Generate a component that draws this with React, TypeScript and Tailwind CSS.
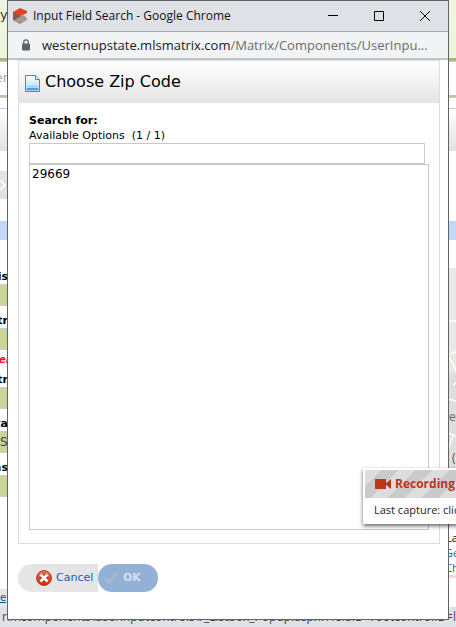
import React from "react";

const ui = "font-['Open_Sans','Noto_Sans',sans-serif]";
const verdana = "font-['DejaVu_Sans',sans-serif]";

function LeftField({ label, value = "" }: { label: string; value?: string }) {
  return (
    <label className="block text-[11px] leading-[14px] font-bold text-black">
      <span className="flex h-[22px] w-2 items-end justify-end whitespace-nowrap">{label}</span>
      <input
        className="block h-[22px] w-full border-y border-[#ccc] bg-[#c8d69b] p-0 text-[12px] font-normal text-[#444]"
        defaultValue={value}
      />
    </label>
  );
}

function LeftColumn() {
  return (
    <div className="w-2 shrink-0 overflow-hidden">
      <div className="h-[22px]" />
      <LeftField label="is" />
      <LeftField label="tr" />
      <p className="flex h-[15px] items-end justify-center pt-1 text-[10px] leading-[10px] font-bold whitespace-nowrap text-[#e8102a] italic">el</p>
      <LeftField label="tr" />
      <LeftField label="ta" value="Se" />
      <LeftField label="ns" />
      <div className="h-[92px]" />
      <div className="h-[18px] bg-[#e6e6e6]">
        <a href="#more" className="block pt-1 text-[10px] leading-[10px] text-[#0052a5] underline">e</a>
      </div>
    </div>
  );
}

function RightColumn() {
  return (
    <div className="w-2 shrink-0 overflow-hidden">
      <div className="h-7" />
      <div className="h-[234px] bg-[#e8e8e4]">
        <svg className="block" width="8" height="234" viewBox="0 0 8 234" fill="none">
          <path d="M0 105H8V234H0z" fill="#dededf" />
          <path d="M0 53H8M0 87L8 84M0 88Q5 94 8 103M5 117L8 115M0 131L8 133M0 165L8 168M5 168L0 181" stroke="#fff" strokeWidth="1.5" />
          <text x="1" y="153" fontFamily="Open Sans" fontSize="12" fill="#666">e</text>
          <text x="4" y="194" fontFamily="Open Sans" fontSize="12" fill="#555">(</text>
        </svg>
      </div>
      <div className="h-7" />
      <div className={`${ui} flex h-[45px] flex-col items-center text-[11px] leading-[15px] whitespace-nowrap`}>
        <p className="text-black">La</p>
        <a href="#get" className="block text-[#1f5dab]">Ge</a>
        <a href="#change" className="block text-[#1f5dab]">Ch</a>
      </div>
      <div className="h-[3px] bg-[#f3d9dc]" />
    </div>
  );
}

function PageBehind() {
  return (
    <div className={`${verdana} overflow-hidden bg-white`}>
      <div className="h-[58px] bg-linear-to-b from-[#f1f5df] to-[#edf4da] pt-[7px] text-[13px] leading-4 text-[#333]">y</div>
      <div className="h-[3px] bg-[#a5b77f]" />
      <div className="h-[34px] border-t border-[#ccc] text-[13px] leading-8 text-[#aaa]">
        <span className="flex w-2 justify-end">er</span>
      </div>
      <div className="h-[3px] border-b border-[#ccc] bg-[#bac896]" />
      <div className="h-[10px]" />
      <div className="h-[43px] border-t border-[#ccc] bg-linear-to-b from-white to-[#e0e0e0]" />
      <div className="h-5" />
      <div className="flex h-7 w-2 items-center bg-[#e2e2e2]">
        <svg width="8" height="12" viewBox="0 0 8 12" fill="none">
          <path d="M0 1L5 6L0 11" stroke="#fff" strokeWidth="1.5" />
        </svg>
      </div>
      <div className="h-[22px]" />
      <div className="h-[19px] bg-[#c3d8f7]" />
      <div className="flex h-[367px] justify-between">
        <LeftColumn />
        <RightColumn />
      </div>
      <div className={`${ui} flex h-5 justify-end bg-[#dee1e6] pt-[2px] text-[12px] leading-4 whitespace-nowrap text-[#444]`}>
        <span>rix\components\userinputcontrols\r_Listbox_Popup.aspx?FieldID=rootcontrolID=</span>
        <span className="text-[#872d8c]">l</span>
      </div>
    </div>
  );
}

function TitleBar() {
  return (
    <header className="flex h-[31px] items-center border-b border-[#a9abae] bg-[#dee1e6]">
      <svg className="ml-[5px]" width="14" height="16" viewBox="0 0 14 16">
        <path d="M0 4V12L7 16V8z" fill="#6f6058" />
        <path d="M7 8L10 7L14 10V12L7 16L1 12z" fill="#a8968a" />
        <path d="M0 4V12L7 9L8 7z" fill="#6f6058" />
        <path d="M0 4L7 0L14 3V5L7 8z" fill="#e8402a" />
      </svg>
      <h1 className="ml-[6px] flex-1 text-[12px] whitespace-nowrap text-[#111]">Input Field Search - Google Chrome</h1>
      <div className="flex">
        <button aria-label="Minimize" className="flex h-[30px] w-[46px] items-center justify-center">
          <svg width="10" height="10" viewBox="0 0 10 10" stroke="#000"><path d="M0 4.5H10" /></svg>
        </button>
        <button aria-label="Maximize" className="flex h-[30px] w-[46px] items-center justify-center">
          <svg width="10" height="10" viewBox="0 0 10 10" stroke="#000" fill="none"><path d="M.5 .5H9.5V9.5H.5z" /></svg>
        </button>
        <button aria-label="Close" className="flex h-[30px] w-[46px] items-center justify-center">
          <svg width="10" height="10" viewBox="0 0 10 10" stroke="#000"><path d="M0 0L10 10M10 0L0 10" /></svg>
        </button>
      </div>
    </header>
  );
}

function AddressBar() {
  return (
    <div className="flex h-7 items-center border-b-2 border-[#c0c2c4] bg-[#f1f3f4] pr-[18px] pl-[14px]">
      <svg className="shrink-0" width="8" height="12" viewBox="0 0 8 12">
        <path d="M1.7 5V3.2a2.3 2.3 0 0 1 4.6 0V5" fill="none" stroke="#5f6368" strokeWidth="1.2" />
        <rect y="4.5" width="8" height="7" rx="1" fill="#5f6368" />
      </svg>
      <span className="ml-3 truncate text-[13px] leading-5 text-[#6b6e71]">
        <span className="text-[#202124]">westernupstate.mlsmatrix.com</span>/Matrix/Components/UserInpu...
      </span>
    </div>
  );
}

function ZipPanel() {
  return (
    <section className="border border-[#ddd] bg-white">
      <div className="flex h-[42px] items-center border-b border-[#e6e6e6] bg-linear-to-b from-white to-[#e5e5e5] pl-[6px]">
        <svg className="mt-1" width="15" height="17" viewBox="0 0 15 17">
          <defs>
            <linearGradient id="sheet" x1="0" y1="0" x2="0" y2="1">
              <stop offset="0" stopColor="#fff" />
              <stop offset="1" stopColor="#a9d3fa" />
            </linearGradient>
          </defs>
          <path d="M.5 .5H10.5L14.5 4.5V16.5H.5z" fill="url(#sheet)" stroke="#4a84c8" />
          <path d="M10.5 .5V4.5H14.5" fill="#dcecfb" stroke="#4a84c8" />
          <path d="M3 11.5H12" stroke="#8dc1f0" />
          <path d="M2 14H13" stroke="#3f9fe8" strokeWidth="2" />
        </svg>
        <h2 className="ml-[5px] text-[16px] leading-6 text-black">Choose Zip Code</h2>
      </div>
      <div className="px-[10px] pt-[10px] pb-[13px] text-[11px] leading-[15px] text-black">
        <label htmlFor="zip-search" className="block">
          <span className="block font-bold">Search for:</span>
          <span className="block whitespace-pre">Available Options  (1 / 1)</span>
        </label>
        <div className="pr-1">
          <input id="zip-search" className="block h-[21px] w-full border border-[#c8c8c8] bg-white px-1 outline-none" />
        </div>
        <select
          aria-label="Available Options"
          size={12}
          className="block h-[366px] w-full appearance-none overflow-hidden border border-[#c8c8c8] bg-white p-0 text-[12px] text-black outline-none"
        >
          <option className="px-[2px] pt-[2px] pb-0 leading-4">29669</option>
        </select>
      </div>
    </section>
  );
}

function Actions() {
  return (
    <div className="mt-5 flex text-[11px]">
      <button className="flex h-7 w-20 items-center rounded-l-full bg-[#e5e5e5] pl-[18px] text-[#1260ba]">
        <svg className="shrink-0" width="16" height="16" viewBox="0 0 16 16">
          <defs>
            <linearGradient id="cancel" x1="0" y1="0" x2="0" y2="1">
              <stop offset="0" stopColor="#f07a50" />
              <stop offset="1" stopColor="#d42406" />
            </linearGradient>
          </defs>
          <circle cx="8" cy="8" r="7.4" fill="url(#cancel)" stroke="#b3361e" />
          <path d="M5 5L11 11M11 5L5 11" stroke="#a52a10" strokeWidth="4.4" />
          <path d="M4.5 4.5L11.5 11.5M11.5 4.5L4.5 11.5" stroke="#fff" strokeWidth="2.8" />
        </svg>
        <span className="ml-1">Cancel</span>
      </button>
      <button className="flex h-7 w-[60px] items-center rounded-full bg-[#93b1d6] pl-[6px] text-[#d3e0f0]">
        <svg width="14" height="12" viewBox="0 0 14 12" fill="none">
          <path d="M1 6L5 10L13 1" stroke="#a9b9cc" strokeWidth="2.8" />
        </svg>
        <span className="ml-[5px] font-bold">OK</span>
      </button>
    </div>
  );
}

function RecordingToast() {
  return (
    <aside className={`${ui} absolute top-[468px] left-[363px] w-[140px] border-2 border-white bg-white text-[12px] whitespace-nowrap shadow-[0_2px_4px_rgba(0,0,0,0.6)]`}>
      <div className="flex h-7 items-center bg-[repeating-linear-gradient(135deg,#ddd_0px,#ddd_12px,#cacaca_12px,#cacaca_24px)] pl-[10px] font-bold text-[#bd351a]">
        <svg width="16" height="12" viewBox="0 0 16 12" fill="#bd351a">
          <path d="M0 1H11V11H0zM10 6L16 1V11z" />
        </svg>
        <span className="ml-1">Recording</span>
      </div>
      <p className="h-6 pl-[9px] text-[11px] leading-6 text-[#222]">Last capture: click</p>
    </aside>
  );
}

export default function App() {
  return (
    <main className="relative overflow-hidden">
      <PageBehind />
      <div className={`${ui} absolute inset-x-[7px] top-0 border border-[#606468] bg-white`}>
        <TitleBar />
        <AddressBar />
        <div className={`${verdana} pr-2 pb-[27px] pl-[10px]`}>
          <ZipPanel />
          <Actions />
        </div>
      </div>
      <RecordingToast />
    </main>
  );
}
